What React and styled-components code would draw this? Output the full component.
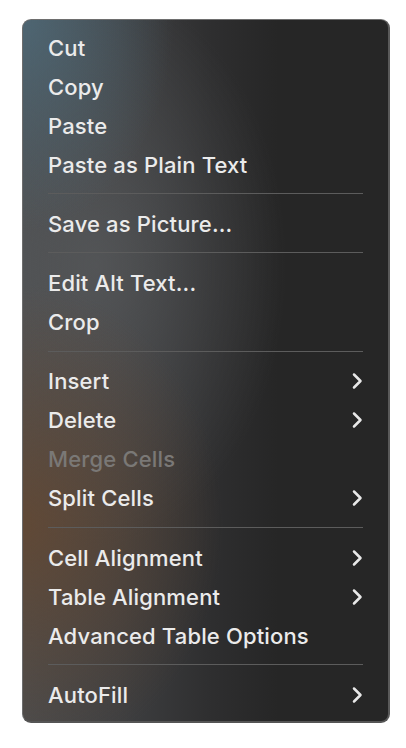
import styled, { createGlobalStyle } from 'styled-components';

const GlobalStyle = createGlobalStyle`
  html, body {
    margin: 0;
    padding: 0;
    background: #ffffff;
  }
  body {
    font-family: Inter, "Liberation Sans", sans-serif;
    -webkit-font-smoothing: antialiased;
  }
`;

const menu = [
  [{ label: 'Cut' }, { label: 'Copy' }, { label: 'Paste' }, { label: 'Paste as Plain Text' }],
  [{ label: 'Save as Picture...' }],
  [{ label: 'Edit Alt Text...' }, { label: 'Crop' }],
  [
    { label: 'Insert', sub: true },
    { label: 'Delete', sub: true },
    { label: 'Merge Cells', disabled: true },
    { label: 'Split Cells', sub: true },
  ],
  [
    { label: 'Cell Alignment', sub: true },
    { label: 'Table Alignment', sub: true },
    { label: 'Advanced Table Options' },
  ],
  [{ label: 'AutoFill', sub: true }],
];

function Chevron() {
  return (
    <svg width="14" height="18" viewBox="0 0 14 18" fill="none">
      <path
        d="M4 2.5 L10.5 9 L4 15.5"
        stroke="#e8e8e8"
        strokeWidth="2.5"
        strokeLinecap="round"
        strokeLinejoin="round"
      />
    </svg>
  );
}

export default function App() {
  return (
    <>
      <GlobalStyle />
      <Page>
        <Menu>
          {menu.map((group, gi) => (
            <Group key={gi}>
              {gi > 0 && <Separator />}
              {group.map((item) => (
                <Item key={item.label} $disabled={item.disabled}>
                  <span>{item.label}</span>
                  {item.sub && <Chevron />}
                </Item>
              ))}
            </Group>
          ))}
        </Menu>
      </Page>
    </>
  );
}

const Page = styled.div`
  width: 406px;
  height: 748px;
  padding: 19px 0 0 22px;
  box-sizing: border-box;
`;

const Menu = styled.div`
  width: 368px;
  box-sizing: border-box;
  padding: 8px 0 7px;
  border: 1px solid #6e6e6e;
  border-right-width: 2px;
  border-bottom-width: 2px;
  border-right-color: #5a5a5a;
  border-bottom-color: #555;
  border-radius: 9px;
  background:
    radial-gradient(ellipse 150px 210px at 0% 0%, rgba(78, 104, 118, 0.9), rgba(78, 104, 118, 0) 100%),
    radial-gradient(ellipse 200px 240px at 0% 72%, rgba(100, 72, 50, 0.85), rgba(100, 72, 50, 0) 100%),
    radial-gradient(ellipse 190px 280px at 20% 35%, rgba(90, 92, 94, 0.7), rgba(90, 92, 94, 0) 100%),
    linear-gradient(90deg, #4a4c4e 0%, #3f4042 25%, #2e2e2f 52%, #262626 70%, #262626 100%);
`;

const Group = styled.div`
  display: flex;
  flex-direction: column;
`;

const Separator = styled.div`
  height: 1px;
  margin: 9px 25px 10px 25px;
  background: #5c5c5c;
`;

const Item = styled.div`
  display: flex;
  align-items: center;
  justify-content: space-between;
  height: 39.1px;
  padding: 0 24px 0 25px;
  font-size: 22px;
  font-weight: 500;
  letter-spacing: 0.15px;
  color: ${(p) => (p.$disabled ? '#7a7876' : '#ebebeb')};
`;
